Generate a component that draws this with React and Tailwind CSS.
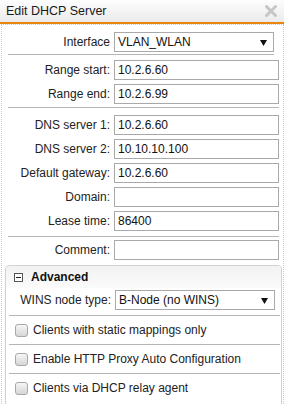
// Edit DHCP Server dialog

function Field({ label, value, labelW = 'w-[108px]' }) {
  return (
    <div className="h-[24px] flex items-center">
      <div className={`${labelW} text-right shrink-0`}>{label}</div>
      <div className="ml-[4px] w-[165px] h-[20px] border border-[#a9a9a9] bg-white flex items-center pl-[3px] text-[#111]">
        {value}
      </div>
    </div>
  )
}

function SelectField({ label, value, labelW = 'w-[108px]' }) {
  return (
    <div className="h-[24px] flex items-center">
      <div className={`${labelW} text-right shrink-0`}>{label}</div>
      <div className="ml-[4px] w-[160px] h-[20px] border border-[#a9a9a9] bg-white flex items-center justify-between pl-[3px] pr-[6px] text-[#111]">
        <span>{value}</span>
        <svg width="7" height="7" viewBox="0 0 7 7">
          <path d="M0 1 L7 1 L3.5 7 Z" fill="#111" />
        </svg>
      </div>
    </div>
  )
}

function Sep({ className }) {
  return <div className={`h-px bg-[#b4b4b4] ${className}`} />
}

function Check({ label }) {
  return (
    <div className="h-[28px] flex items-center pl-[9px]">
      <div className="w-[13px] h-[13px] rounded-[3px] border border-[#a8a8a8] bg-linear-to-b from-[#f6f6f6] to-[#d6d6d6]" />
      <span className="ml-[5px]">{label}</span>
    </div>
  )
}

export default function App() {
  return (
    <div className="w-[284px] h-[404px] overflow-hidden bg-white font-['Liberation_Sans',Arial,sans-serif] text-[12px] text-[#222]">

      {/* ── Barra de título ── */}
      <div className="h-[24px] flex items-center justify-between pl-[6px] pr-[7px] bg-linear-to-b from-[#fdfdfd] to-[#ebebeb] border-b-2 border-[#e9840f]">
        <span className="text-[12.5px] text-[#1a1a1a]">Edit DHCP Server</span>
        <svg width="12" height="12" viewBox="0 0 12 12">
          <path d="M1.5 1.5 L10.5 10.5 M10.5 1.5 L1.5 10.5" stroke="#c6c6c6" strokeWidth="3" strokeLinecap="round" />
        </svg>
      </div>

      {/* ── Cuerpo ── */}
      <div className="ml-[1px] w-[283px] h-[380px] border-l border-r border-t border-dotted border-[#c8c8c8]">
        <div className="pt-[5px]">
          <SelectField label="Interface" value="VLAN_WLAN" />
        </div>
        <Sep className="ml-[6px] w-[266px]" />

        <div className="mt-[3px]">
          <Field label="Range start:" value="10.2.6.60" />
          <Field label="Range end:" value="10.2.6.99" />
        </div>
        <Sep className="mt-[1px] ml-[6px] w-[271px]" />

        <div className="mt-[5px]">
          <Field label="DNS server 1:" value="10.2.6.60" />
          <Field label="DNS server 2:" value="10.10.10.100" />
          <Field label="Default gateway:" value="10.2.6.60" />
          <Field label="Domain:" value="" />
          <Field label="Lease time:" value="86400" />
        </div>
        <Sep className="mt-[3px] ml-[6px] w-[271px]" />

        <div className="mt-[1px]">
          <Field label="Comment:" value="" />
        </div>

        {/* ── Avanzado ── */}
        <div className="mt-[3px] ml-[3px] w-[277px] h-[200px] border border-[#d2d2d2] rounded-t-[4px]">
          <div className="h-[22px] flex items-center pl-[8px] rounded-t-[4px] bg-linear-to-b from-[#f2f2f2] to-[#fbfbfb]">
            <svg width="9" height="9" viewBox="0 0 9 9">
              <rect x="0.5" y="0.5" width="8" height="8" fill="white" stroke="#555" />
              <path d="M2 4.5 H7" stroke="#222" />
            </svg>
            <span className="ml-[8px] font-bold text-[#111]">Advanced</span>
          </div>
          <SelectField label="WINS node type:" value="B-Node (no WINS)" labelW="w-[105px]" />
          <Sep className="mt-[3px] ml-[3px] w-[271px]" />
          <Check label="Clients with static mappings only" />
          <Sep className="ml-[3px] w-[271px]" />
          <Check label="Enable HTTP Proxy Auto Configuration" />
          <Sep className="ml-[3px] w-[271px]" />
          <Check label="Clients via DHCP relay agent" />
        </div>
      </div>
    </div>
  )
}
